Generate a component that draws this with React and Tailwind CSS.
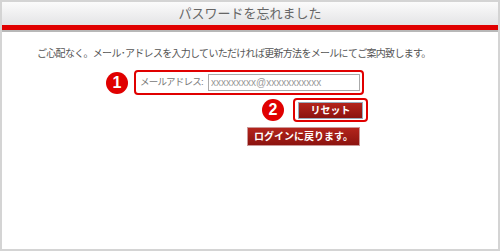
export default function App() {
  return (
    <div className="w-[500px] h-[251px] bg-white border-2 border-[#d4d4d4] overflow-hidden flex flex-col" style={{ fontFamily: '"Liberation Sans", "Noto Sans CJK JP", sans-serif' }}>
      {/* header */}
      <div className="h-[23px] bg-gradient-to-b from-[#fbfbfb] to-[#e4e4e6] flex items-center justify-center text-[13px] text-[#666] shrink-0">
        パスワードを忘れました
      </div>
      <div className="h-[5px] bg-[#e00000] shrink-0" />
      <div className="h-[2px] bg-[#b8b8b8] shrink-0" />

      <div className="flex-1 flex flex-col">
        <p className="mt-[14px] ml-[35px] text-[10px] text-[#555] tracking-[-0.7px] whitespace-nowrap">
          ご心配なく。メール･アドレスを入力していただければ更新方法をメールにてご案内致します。
        </p>

        {/* row 1 */}
        <div className="flex items-center mt-[9px] ml-[104px]">
          <span className="w-[22px] h-[22px] rounded-full bg-[#e00000] text-white text-[16px] font-bold flex items-center justify-center leading-none">1</span>
          <div className="ml-[6px] w-[230px] h-[25px] border-2 border-[#e00000] rounded-[4px] flex items-center pl-[4px]">
            <span className="text-[9.5px] text-[#777] w-[68px] shrink-0 whitespace-nowrap tracking-[-0.8px]">メールアドレス:</span>
            <input
              type="text"
              defaultValue="xxxxxxxxx@xxxxxxxxxxx"
              className="w-[152px] h-[17px] border border-[#aaa] px-[2px] text-[10px] text-[#999] outline-none"
            />
          </div>
        </div>

        {/* row 2 */}
        <div className="flex items-center mt-[3px] ml-[260px]">
          <span className="w-[22px] h-[22px] rounded-full bg-[#e00000] text-white text-[16px] font-bold flex items-center justify-center leading-none">2</span>
          <div className="ml-[9px] w-[75px] h-[24px] border-2 border-[#e00000] rounded-[4px] flex items-center justify-center">
            <button className="w-[65px] h-[17px] bg-gradient-to-b from-[#b3241c] to-[#8c130f] border border-[#9ab] text-white text-[10px] font-bold">
              リセット
            </button>
          </div>
        </div>

        <div className="ml-[245px] mt-[1px]">
          <button className="w-[113px] h-[19px] bg-gradient-to-b from-[#b3241c] to-[#8c130f] border border-[#c99] text-white text-[10px] font-bold">
            ログインに戻ります。
          </button>
        </div>
      </div>
    </div>
  );
}
